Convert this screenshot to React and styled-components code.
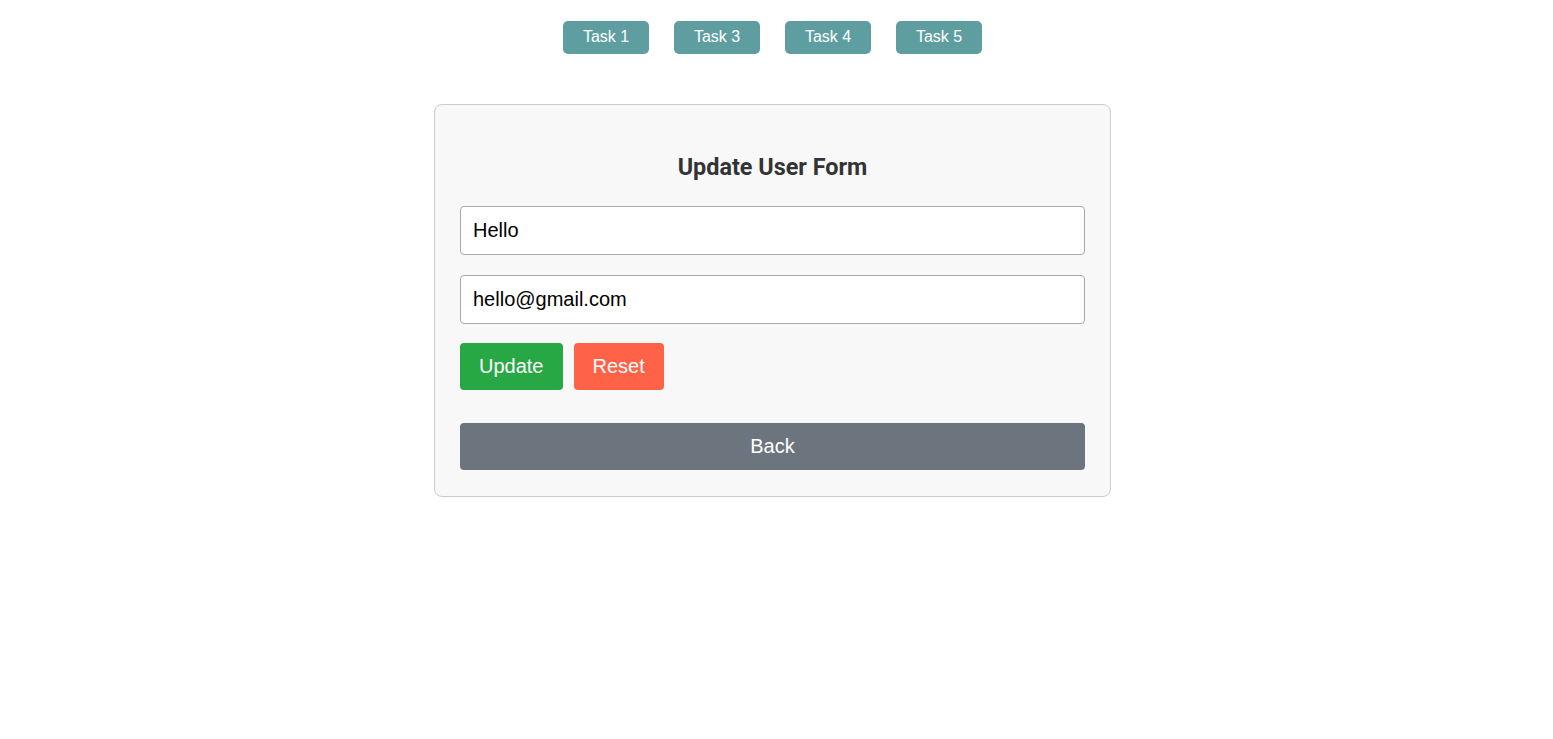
import React, { useState } from 'react';
import styled, { createGlobalStyle } from 'styled-components';

const GlobalStyle = createGlobalStyle`
  body {
    margin: 0;
    background: #ffffff;
    font-family: 'Liberation Sans', Arial, sans-serif;
  }
`

const Page = styled.div`
  display: flex;
  flex-direction: column;
  align-items: center;
  padding-top: 21px;
  padding-right: 8px;
`

const Nav = styled.nav`
  display: flex;
  gap: 25px;
  margin-bottom: 50px;
`

const NavButton = styled.button`
  width: 86px;
  height: 33px;
  padding: 0 0 2px;
  border: none;
  border-radius: 5px;
  background: #5f9ea0;
  color: #ffffff;
  font-family: 'Liberation Sans', Arial, sans-serif;
  font-size: 16px;
  cursor: pointer;
`

const Card = styled.div`
  box-sizing: border-box;
  width: 677px;
  padding: 25px 25px 26px;
  background: #f8f8f8;
  border: 1px solid #cccccc;
  border-radius: 8px;
`

const Title = styled.h2`
  margin: 23px 0 25px;
  text-align: center;
  font-family: Roboto, 'Liberation Sans', sans-serif;
  font-size: 23.4px;
  font-weight: 700;
  color: #333333;
`

const Input = styled.input`
  display: block;
  box-sizing: border-box;
  width: 100%;
  height: 49px;
  margin-bottom: 20px;
  padding: 0 12px;
  border: 1px solid #aaaaaa;
  border-radius: 4px;
  background: #ffffff;
  font-family: 'Liberation Sans', Arial, sans-serif;
  font-size: 20px;
  color: #000000;
`

const ButtonRow = styled.div`
  display: flex;
  gap: 11px;
  margin-top: -1px;
  margin-bottom: 33px;
`

const ActionButton = styled.button`
  height: 47px;
  padding: 0 19px;
  border: none;
  border-radius: 4px;
  background: ${p => p.$bg};
  color: #ffffff;
  font-family: 'Liberation Sans', Arial, sans-serif;
  font-size: 20px;
  cursor: pointer;
`

const BackButton = styled(ActionButton)`
  display: block;
  width: 100%;
`

function App() {
  const [name, setName] = useState('Hello');
  const [email, setEmail] = useState('hello@gmail.com');

  const reset = () => {
    setName('');
    setEmail('');
  };

  return (
    <Page>
      <GlobalStyle />
      <Nav>
        <NavButton>Task 1</NavButton>
        <NavButton>Task 3</NavButton>
        <NavButton>Task 4</NavButton>
        <NavButton>Task 5</NavButton>
      </Nav>

      <Card>
        <Title>Update User Form</Title>
        <Input value={name} onChange={e => setName(e.target.value)} />
        <Input value={email} onChange={e => setEmail(e.target.value)} />
        <ButtonRow>
          <ActionButton $bg="#28a745">Update</ActionButton>
          <ActionButton $bg="#ff6347" onClick={reset}>Reset</ActionButton>
        </ButtonRow>
        <BackButton $bg="#6c757d">Back</BackButton>
      </Card>
    </Page>
  );
}

export default App;
